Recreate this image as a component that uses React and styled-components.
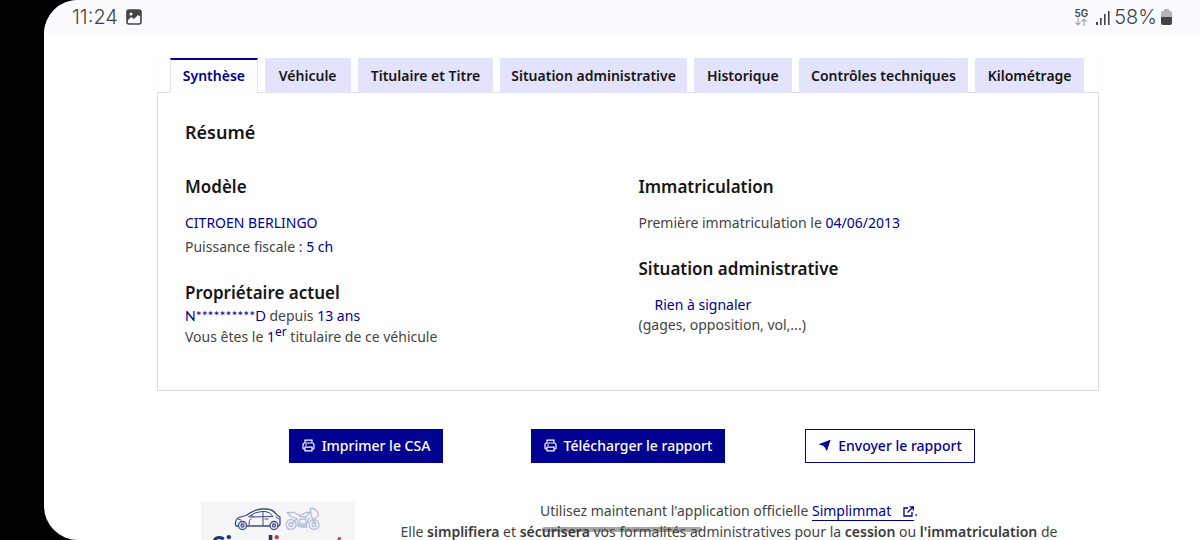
import React from 'react';
import styled, { createGlobalStyle, css } from 'styled-components';

const BLUE = '#000091';

const GlobalStyle = createGlobalStyle`
  * { box-sizing: border-box; }
  body { margin: 0; background: #000; font-family: 'Noto Sans', sans-serif; font-size: 14px; line-height: 21px; color: #444; }
  h2, h3, p { margin: 0; }
`;

const Screen = styled.div`
  position: relative;
  height: 100vh;
  margin-left: 44px;
  background: #fff;
  border-radius: 34px 0 0 34px;
  overflow: hidden;
`;

const StatusBar = styled.header`
  display: flex;
  justify-content: space-between;
  align-items: center;
  height: 34px;
  padding: 0 28px;
  background: #fafaff;
  font-family: Inter, sans-serif;
  font-size: 20px;
  font-weight: 300;
  color: #444;
`;

const StatusGroup = styled.div`
  display: flex;
  align-items: center;
  gap: ${(p) => p.$gap}px;
`;

const Network = styled.div`
  display: flex;
  flex-direction: column;
  align-items: center;
  font-size: 10px;
  line-height: 9px;
  font-weight: 600;
  margin-right: 4px;
`;

const Content = styled.main`
  padding: 24px 101px 0 113px;
`;

const TabList = styled.div`
  display: grid;
  grid-template-columns: 88fr 86fr 136fr 187fr 98fr 170fr 109fr;
  gap: 7px;
  padding: 0 14px 0 12px;
  border: solid #fafafa;
  border-width: 0 1px;
`;

const Tab = styled.button`
  height: 35px;
  padding: 0;
  border: 0;
  background: #e3e3fd;
  color: #161616;
  font: 600 14px/21px 'Noto Sans', sans-serif;
  white-space: nowrap;
  ${(p) => p.$active && css`
    padding-bottom: 2px;
    background: #fff;
    color: ${BLUE};
    border: 1px solid #e5e5e5;
    border-top: 2px solid ${BLUE};
    border-bottom: 0;
    position: relative;
    z-index: 1;
  `}
`;

const Panel = styled.section`
  margin-top: -1px;
  padding: 27px 26px 43px 27px;
  border: 1px solid #ddd;
`;

const Title = styled.h2`
  font-size: 18px;
  line-height: 24px;
  font-weight: 600;
  color: #161616;
`;

const Columns = styled.div`
  display: grid;
  grid-template-columns: 1fr 1fr;
  gap: 20px;
  margin-top: 31px;
`;

const Block = styled.div`
  line-height: ${(p) => p.$line}px;
  & + & { margin-top: 22px; }
`;

const Subtitle = styled.h3`
  font-size: 17px;
  line-height: 24px;
  font-weight: 600;
  color: #161616;
  margin-bottom: ${(p) => p.$space}px;
`;

const Value = styled.span`
  color: ${BLUE};
  sup { font-size: 12px; line-height: 0; }
`;

const MaskedName = styled(Value)`
  font-family: Lato, sans-serif;
  line-height: 20px;
`;

const Indented = styled.p`
  padding-left: 16px;
`;

const Actions = styled.div`
  display: grid;
  grid-template-columns: repeat(3, 1fr);
  justify-items: center;
  padding: 0 78px;
  margin-top: 38px;
`;

const Action = styled.button`
  display: flex;
  align-items: center;
  gap: 7px;
  height: 34px;
  padding: 0 12px 1px;
  border: 1px solid ${BLUE};
  background: ${(p) => (p.$outline ? '#fff' : BLUE)};
  color: ${(p) => (p.$outline ? BLUE : '#fff')};
  font: 500 14px/21px 'Noto Sans', sans-serif;
  white-space: nowrap;
`;

const Promo = styled.div`
  display: flex;
  gap: 30px;
  margin-top: 37px;
  padding: 0 26px 0 44px;
`;

const LogoCard = styled.div`
  flex: none;
  width: 154px;
  margin-top: 1px;
  background: #f6f6f6;
  padding-top: 6px;
  text-align: center;
  svg { display: block; margin: 0 auto; }
`;

const LogoName = styled.div`
  font: 900 25px/26px Lato, sans-serif;
  color: #21307f;
  span { color: #d9333f; }
`;

const PromoText = styled.p`
  flex: 1;
  text-align: center;
  b { font-weight: 600; color: #3a3a3a; }
`;

const AppLink = styled.a`
  color: ${BLUE};
  text-decoration: none;
  border-bottom: 1px solid ${BLUE};
  svg { margin-left: 12px; vertical-align: -1px; }
`;

const HomeBar = styled.div`
  position: absolute;
  left: 50%;
  bottom: 8px;
  width: 160px;
  height: 5px;
  border-radius: 3px;
  transform: translateX(-50%);
  background: rgba(60, 60, 60, 0.45);
`;

const PhotoIcon = () => (
  <svg width="16" height="16" viewBox="0 0 16 16" aria-hidden="true">
    <rect x="1" y="1" width="14" height="14" rx="2" fill="none" stroke="#444" strokeWidth="1.6" />
    <path d="M1 1h14v7l-3-2-4 4-3-2-4 4z" fill="#444" />
    <circle cx="5" cy="5" r="1.5" fill="#fafaff" />
  </svg>
);

const ArrowsIcon = () => (
  <svg width="12" height="8" viewBox="0 0 12 8" fill="none" stroke="#aaa" strokeWidth="1.2" aria-hidden="true">
    <path d="M3 0v7M.5 4.500 3 7l2.500-2.500M9 8V1M6.500 3.500 9 1l2.500 2.500" />
  </svg>
);

const SignalIcon = () => (
  <svg width="14" height="15" viewBox="0 0 14 15" fill="#444" aria-hidden="true">
    <rect x="0" y="12" width="2" height="3" />
    <rect x="4" y="8" width="1.600" height="7" />
    <rect x="8" y="4" width="1.600" height="11" />
    <rect x="12" y="1" width="1.600" height="14" />
  </svg>
);

const BatteryIcon = () => (
  <svg width="11" height="16" viewBox="0 0 11 16" aria-hidden="true">
    <path d="M3 0h5v2h1.500q1.500 0 1.500 1.500V8H0V3.500Q0 2 1.500 2H3z" fill="#b5b5b8" />
    <path d="M0 8h11v6q0 2-2 2H2q-2 0-2-2z" fill="#444" />
  </svg>
);

const PrinterIcon = () => (
  <svg width="13" height="13" viewBox="0 0 13 13" fill="none" stroke="currentColor" strokeWidth="1.2" aria-hidden="true">
    <path d="M3 4V1.200h7V4M3 10H1.500Q1 10 1 9.500V6q0-2 2-2h7q2 0 2 2v3.500q0 .5-.5.500H10M3 8.200h7v3.600H3zM3 6h2" />
  </svg>
);

const SendIcon = () => (
  <svg width="13" height="13" viewBox="0 0 13 13" aria-hidden="true">
    <path d="M12.600.8 8.800 12.200 6.900 8.500 9.600 4 5 6.700.6 5.200z" fill="currentColor" />
    <path d="M12.600.8 6.900 8.500 5 6.700z" fill="currentColor" />
  </svg>
);

const ExternalIcon = () => (
  <svg width="11" height="11" viewBox="0 0 11 11" fill="none" stroke="currentColor" strokeWidth="1.300" aria-hidden="true">
    <path d="M5 2H1v8h8V6M6.500.8H10.300V4.500M10 1 4.500 6.500" />
  </svg>
);

const VehiclesIcon = () => (
  <svg width="88" height="24" viewBox="0 0 88 24" fill="none" strokeLinecap="round" strokeLinejoin="round" aria-hidden="true">
    <g stroke="#3b4a8c" strokeWidth="1.300">
      <path d="M4.500 19H2.500Q1.500 19 1.500 16.500 1.500 12 5 10.500L12 8.500Q21 2 28 2h4q7 0 11 6l3 2v7q0 2-2.500 2M13 19h22.500" />
      <path d="M15 9.500Q21 4.500 28 4.500h3q5 0 8 5l-23 .5zM29 4.500v14M4 12l3 1M31 12h3M20 10l-3-1.500M17 12q-2 0-2 6M42 10l3 2" strokeWidth="1" />
      <circle cx="8.500" cy="18.500" r="4" /><circle cx="40" cy="18.500" r="4" />
      <circle cx="8.500" cy="18.500" r="1.500" /><circle cx="40" cy="18.500" r="1.500" />
    </g>
    <g stroke="#b3bedb" strokeWidth="1.300">
      <circle cx="57" cy="17.500" r="5" /><circle cx="80" cy="17.500" r="5" />
      <circle cx="57" cy="17.500" r="2" /><circle cx="80" cy="17.500" r="2" />
      <path d="M53 5.500h7l6 3 6-3h5l-1-4h4l4 4v4l-4 2 1 5M53 5.500l4 4 6 2-5 5M65 9l7 1 4-5M63 12l2 7h7l3-8M62 18l5 2h6M66 12h6v5h-6zM76 5l4 11" />
    </g>
  </svg>
);

const TABS = [
  'Synthèse',
  'Véhicule',
  'Titulaire et Titre',
  'Situation administrative',
  'Historique',
  'Contrôles techniques',
  'Kilométrage',
];

export default function App() {
  return (
    <>
      <GlobalStyle />
      <Screen>
        <StatusBar>
          <StatusGroup $gap={8}>
            <span>11:24</span>
            <PhotoIcon />
          </StatusGroup>
          <StatusGroup $gap={4}>
            <Network>
              5G
              <ArrowsIcon />
            </Network>
            <SignalIcon />
            <span>58%</span>
            <BatteryIcon />
          </StatusGroup>
        </StatusBar>
        <Content>
          <TabList role="tablist">
            {TABS.map((label, i) => (
              <Tab key={label} type="button" role="tab" aria-selected={i === 0} $active={i === 0}>
                {label}
              </Tab>
            ))}
          </TabList>
          <Panel role="tabpanel" aria-label="Synthèse">
            <Title>Résumé</Title>
            <Columns>
              <div>
                <Block $line={24}>
                  <Subtitle $space={12}>Modèle</Subtitle>
                  <p><Value>CITROEN BERLINGO</Value></p>
                  <p>Puissance fiscale : <Value>5 ch</Value></p>
                </Block>
                <Block $line={21}>
                  <Subtitle $space={0}>Propriétaire actuel</Subtitle>
                  <p><MaskedName>N**********D</MaskedName> depuis <Value>13 ans</Value></p>
                  <p>Vous êtes le <Value>1<sup>er</sup></Value> titulaire de ce véhicule</p>
                </Block>
              </div>
              <div>
                <Block $line={24}>
                  <Subtitle $space={12}>Immatriculation</Subtitle>
                  <p>Première immatriculation le <Value>04/06/2013</Value></p>
                </Block>
                <Block $line={20}>
                  <Subtitle $space={14}>Situation administrative</Subtitle>
                  <Indented><Value>Rien à signaler</Value></Indented>
                  <p>(gages, opposition, vol,...)</p>
                </Block>
              </div>
            </Columns>
          </Panel>
          <Actions>
            <Action type="button"><PrinterIcon />Imprimer le CSA</Action>
            <Action type="button"><PrinterIcon />Télécharger le rapport</Action>
            <Action type="button" $outline><SendIcon />Envoyer le rapport</Action>
          </Actions>
          <Promo>
            <LogoCard>
              <VehiclesIcon />
              <LogoName>Simpl<span>immat</span></LogoName>
            </LogoCard>
            <PromoText>
              Utilisez maintenant l'application officielle <AppLink href="#simplimmat">Simplimmat<ExternalIcon /></AppLink>.
              <br />
              Elle <b>simplifiera</b> et <b>sécurisera</b> vos formalités administratives pour la <b>cession</b> ou <b>l'immatriculation</b> de
            </PromoText>
          </Promo>
        </Content>
        <HomeBar />
      </Screen>
    </>
  );
}
